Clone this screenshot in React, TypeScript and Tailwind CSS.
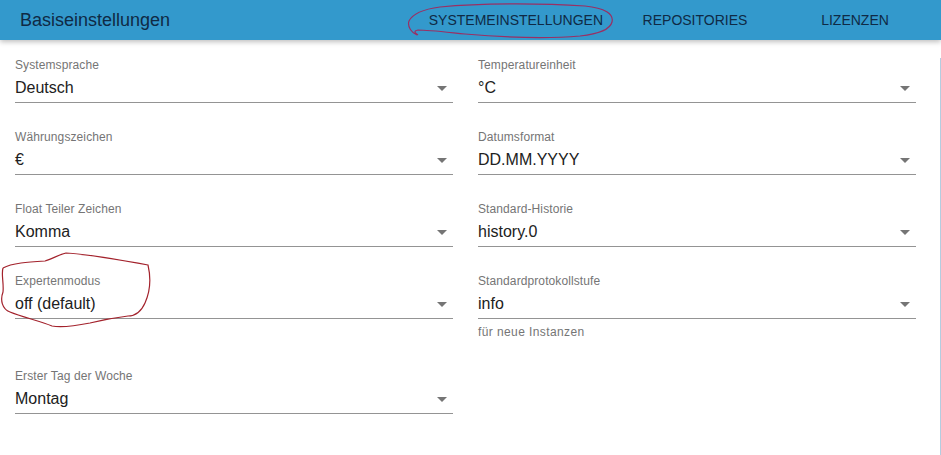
import React from "react";

const font = { fontFamily: '"Liberation Sans", Arial, sans-serif' };

function Arrow() {
  return (
    <svg width="10" height="5" viewBox="0 0 10 5" className="shrink-0 mr-[6px]">
      <path d="M0 0 L10 0 L5 5 Z" fill="#757575" />
    </svg>
  );
}

function Field({ label, value, helper }: { label: string; value: string; helper?: string }) {
  return (
    <div className="flex flex-col">
      <div className="text-[12px] leading-[14px] text-[#757575] tracking-[0.1px]">{label}</div>
      <div className="mt-[5px] flex items-center justify-between border-b border-[#949494] pb-[3px]">
        <span className="text-[16px] leading-[22px] text-[#212121]">{value}</span>
        <Arrow />
      </div>
      {helper && (
        <div className="mt-[4px] text-[12px] leading-[19px] text-[#757575] tracking-[0.4px]">{helper}</div>
      )}
    </div>
  );
}

export default function App() {
  return (
    <div className="relative w-[941px] h-[455px] overflow-hidden bg-white" style={font}>
      <header className="relative z-10 flex h-[40px] items-center bg-[#3399cc] shadow-[0_2px_5px_rgba(0,0,0,0.25)]">
        <div className="pl-[20px] text-[18px] text-[#0f2a45]">Basiseinstellungen</div>
        <nav className="ml-auto mr-[6px] flex h-full">
          {["SYSTEMEINSTELLUNGEN", "REPOSITORIES", "LIZENZEN"].map((t) => (
            <div key={t} className="flex min-w-[160px] items-center justify-center px-[12px] text-[14px] text-[#0f2a45]">
              {t}
            </div>
          ))}
        </nav>
      </header>
      <main className="relative">
        <div className="grid grid-cols-2 gap-x-[25px] gap-y-[27px] pl-[15px] pr-[25px] pt-[18px] items-start">
          <Field label="Systemsprache" value="Deutsch" />
          <Field label="Temperatureinheit" value="°C" />
          <Field label="Währungszeichen" value="€" />
          <Field label="Datumsformat" value="DD.MM.YYYY" />
          <Field label="Float Teiler Zeichen" value="Komma" />
          <Field label="Standard-Historie" value="history.0" />
          <Field label="Expertenmodus" value="off (default)" />
          <Field label="Standardprotokollstufe" value="info" helper="für neue Instanzen" />
          <Field label="Erster Tag der Woche" value="Montag" />
        </div>
        <div className="absolute right-0 top-[18px] h-[420px] w-px bg-[#b3cde0]" />
      </main>
      <svg className="pointer-events-none absolute left-0 top-0 z-20" width="941" height="455" viewBox="0 0 941 455">
        <path
          d="M417 35 C412 33 407 27 409 21 C413 13 425 9 440 7 C480 3 540 3 585 6 C605 8 614 14 612 22 C610 30 598 34 580 36 C545 39 500 37 465 34 C445 32 428 30 418 30 C413 31 415 33 418 35"
          fill="none"
          stroke="#9a2f63"
          strokeWidth="1.2"
        />
        <path
          d="M3 268 C12 263 28 262 45 261 C52 259 58 255 66 253 C85 254 110 258 148 265 C151 278 150 292 145 303 C141 312 135 316 128 316 C112 318 102 320 90 323 C75 326 62 328 52 326 C40 321 22 317 10 312 C2 309 0 300 3 292 C4 283 1 274 3 268"
          fill="none"
          stroke="#a3222c"
          strokeWidth="1.2"
        />
      </svg>
    </div>
  );
}
